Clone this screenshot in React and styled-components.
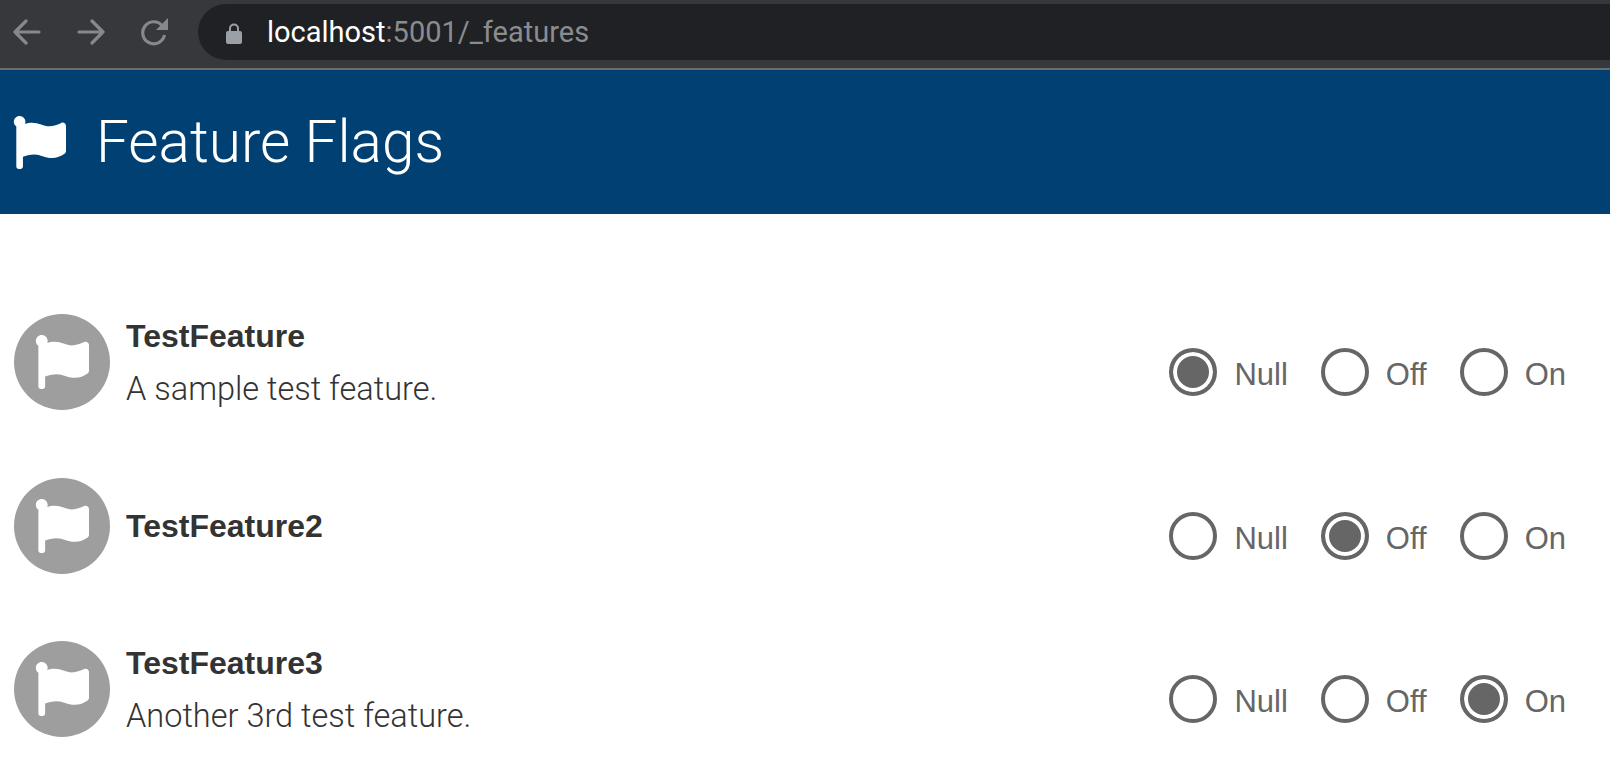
import * as React from "react";
import styled, { createGlobalStyle } from "styled-components";
import { FaFlag } from "react-icons/fa";

const GlobalStyle = createGlobalStyle`
  html, body {
    margin: 0;
    padding: 0;
    background: #fff;
    overflow: hidden;
    font-family: "Roboto", "Liberation Sans", sans-serif;
  }
`;

const Toolbar = styled.div`
  height: 68px;
  box-sizing: border-box;
  padding: 4px 0 8px 13px;
  display: flex;
  align-items: stretch;
  background: #37383b;
`;

const ToolbarLine = styled.div`
  height: 2px;
  background: #6c6c6c;
`;

const NavButtons = styled.div`
  display: flex;
  align-items: center;
  gap: 36px;
  margin-right: 29px;
`;

const NavIcon = styled.svg`
  width: 28px;
  height: 28px;
  fill: none;
  stroke: #87888a;
  stroke-width: 3.2;
  stroke-linecap: round;
  stroke-linejoin: round;
`;

const ReloadArrow = styled.path`
  fill: #87888a;
  stroke: none;
`;

const ReloadArc = styled.path`
  stroke-linecap: butt;
`;

const AddressBar = styled.div`
  flex: 1;
  display: flex;
  align-items: center;
  background: #202124;
  border-radius: 28px 0 0 28px;
  padding-left: 28px;
`;

const LockIcon = styled.svg`
  width: 16px;
  height: 21px;
  margin: 2px 25px 0 0;
  fill: #9aa0a6;
`;

const Url = styled.div`
  font-size: 29px;
  color: #8b8c8e;

  b {
    font-weight: 400;
    color: #fff;
  }
`;

const Header = styled.header`
  height: 144px;
  background: #004072;
  color: #fff;
  display: flex;
  align-items: center;
  padding-left: 13px;
`;

const HeaderTitle = styled.h1`
  margin: 0 0 0 30px;
  font-weight: 300;
  font-size: 58.5px;
  line-height: 1;
`;

const FeatureList = styled.main`
  padding: 100px 44px 0 14px;
  display: flex;
  flex-direction: column;
  gap: 67.5px;
`;

const Row = styled.section`
  display: flex;
  justify-content: space-between;
  align-items: center;
  height: 96px;
`;

const Left = styled.div`
  display: flex;
  align-items: center;
`;

const Avatar = styled.div`
  width: 96px;
  height: 96px;
  border-radius: 50%;
  background: #9e9e9e;
  color: #fff;
  display: flex;
  align-items: center;
  justify-content: center;
  flex-shrink: 0;
`;

const Info = styled.div`
  margin-left: 16px;
  color: #333;
`;

const Name = styled.div`
  font-family: "Liberation Sans", sans-serif;
  font-weight: 700;
  font-size: 32px;
  line-height: 44px;
`;

const Description = styled.div`
  font-weight: 300;
  font-size: 32.5px;
  line-height: 44px;
  margin: 9px 0 -1px;
`;

const RadioGroup = styled.div`
  display: flex;
  gap: 33px;
  padding-top: 20px;
`;

const RadioLabel = styled.label`
  display: flex;
  align-items: center;
  gap: 17px;
  color: #666;
  font-size: 31px;
  font-family: "Liberation Sans", sans-serif;
`;

const RadioText = styled.span`
  padding-top: 6px;
`;

const RadioInput = styled.input`
  appearance: none;
  margin: 0;
  width: 48px;
  height: 48px;
  box-sizing: border-box;
  border: 4px solid #666;
  border-radius: 50%;
  background: #fff;

  &:checked {
    background: #666;
    box-shadow: inset 0 0 0 4px #fff;
  }
`;

const features = [
  { name: "TestFeature", description: "A sample test feature.", value: "Null" },
  { name: "TestFeature2", value: "Off" },
  { name: "TestFeature3", description: "Another 3rd test feature.", value: "On" },
];

const App = () => (
  <>
    <GlobalStyle />
    <Toolbar>
      <NavButtons>
        <NavIcon viewBox="0 0 28 28">
          <path d="M26 14H2M13 3 2 14l11 11" />
        </NavIcon>
        <NavIcon viewBox="0 0 28 28">
          <path d="M2 14h24M15 3l11 11-11 11" />
        </NavIcon>
        <NavIcon viewBox="0 0 28 28">
          <ReloadArc d="M21 7.5A11 11 0 1 0 23.5 17" />
          <ReloadArrow d="M27 0v12H15z" />
        </NavIcon>
      </NavButtons>
      <AddressBar>
        <LockIcon viewBox="0 0 16 21">
          <path d="M3 8V5.5a5 5 0 0 1 10 0V8h1a2 2 0 0 1 2 2v9a2 2 0 0 1-2 2H2a2 2 0 0 1-2-2v-9a2 2 0 0 1 2-2zm2 0h6V5.5a3 3 0 0 0-6 0z" />
        </LockIcon>
        <Url>
          <b>localhost</b>:5001/_features
        </Url>
      </AddressBar>
    </Toolbar>
    <ToolbarLine />
    <Header>
      <FaFlag size={53} />
      <HeaderTitle>Feature Flags</HeaderTitle>
    </Header>
    <FeatureList>
      {features.map((f) => (
        <Row key={f.name}>
          <Left>
            <Avatar>
              <FaFlag size={54} />
            </Avatar>
            <Info>
              <Name>{f.name}</Name>
              {f.description && <Description>{f.description}</Description>}
            </Info>
          </Left>
          <RadioGroup>
            {["Null", "Off", "On"].map((option) => (
              <RadioLabel key={option}>
                <RadioInput
                  type="radio"
                  name={f.name}
                  defaultChecked={option === f.value}
                />
                <RadioText>{option}</RadioText>
              </RadioLabel>
            ))}
          </RadioGroup>
        </Row>
      ))}
    </FeatureList>
  </>
);

export default App;
